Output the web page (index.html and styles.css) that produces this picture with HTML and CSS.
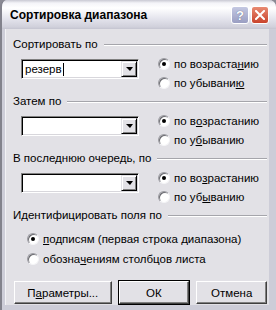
FILE: index.html
```html
<!DOCTYPE html>
<html lang="ru">
<head>
    <meta charset="UTF-8">
    <meta name="viewport" content="width=device-width, initial-scale=1.0">
    <title>Сортировка диапазона</title>
    <link rel="stylesheet" href="styles.css">
</head>
<body>
    <div class="window">
        <div class="titlebar">
            <span class="title">Сортировка диапазона</span>
            <div class="caption-buttons">
                <div class="cap help">?</div>
                <div class="cap close">
                    <svg width="10" height="10" viewBox="0 0 10 10">
                        <path d="M1 1 L9 9 M9 1 L1 9" stroke="#ffffff" stroke-width="2" stroke-linecap="square"/>
                    </svg>
                </div>
            </div>
        </div>

        <div class="client">
            <div class="group">
                <div class="group-label"><span>Сортировать по</span></div>
                <div class="sort-row">
                    <div class="combo">
                        <div class="combo-text">резерв<span class="caret"></span></div>
                        <div class="combo-btn"><span class="arrow"></span></div>
                    </div>
                    <div class="radios">
                        <label class="radio"><span class="dot checked"></span>по возраста<u>н</u>ию</label>
                        <label class="radio"><span class="dot"></span>по убывани<u>ю</u></label>
                    </div>
                </div>
            </div>

            <div class="group">
                <div class="group-label"><span>Затем по</span></div>
                <div class="sort-row">
                    <div class="combo">
                        <div class="combo-text"></div>
                        <div class="combo-btn"><span class="arrow"></span></div>
                    </div>
                    <div class="radios">
                        <label class="radio"><span class="dot checked"></span>по в<u>о</u>зрастанию</label>
                        <label class="radio"><span class="dot"></span>по у<u>б</u>ыванию</label>
                    </div>
                </div>
            </div>

            <div class="group">
                <div class="group-label"><span>В последнюю очередь, по</span></div>
                <div class="sort-row">
                    <div class="combo">
                        <div class="combo-text"></div>
                        <div class="combo-btn"><span class="arrow"></span></div>
                    </div>
                    <div class="radios">
                        <label class="radio"><span class="dot checked"></span>по во<u>з</u>растанию</label>
                        <label class="radio"><span class="dot"></span>по уб<u>ы</u>ванию</label>
                    </div>
                </div>
            </div>

            <div class="group ident">
                <div class="group-label"><span>Идентифицировать поля по</span></div>
                <div class="ident-radios">
                    <label class="radio"><span class="dot checked"></span><u>п</u>одписям (первая строка диапазона)</label>
                    <label class="radio"><span class="dot"></span>обозна<u>ч</u>ениям столбцов листа</label>
                </div>
            </div>

            <div class="buttons">
                <div class="btn wide">П<u>а</u>раметры...</div>
                <div class="btn default">ОК</div>
                <div class="btn">Отмена</div>
            </div>
        </div>
    </div>
</body>
</html>
```

FILE: styles.css
```css
body {
    margin: 0;
    padding: 0;
    font-family: "Liberation Sans", Arial, sans-serif;
    font-size: 11.5px;
    color: #000;
    background: #8a8a94;
}
.window {
    width: 276px;
    height: 310px;
    box-sizing: border-box;
    display: flex;
    flex-direction: column;
    background: #cdcdd8;
    border-left: 2px solid #82828c;
    border-radius: 7px 7px 0 0;
    overflow: hidden;
}
.titlebar {
    height: 29px;
    flex: none;
    display: flex;
    align-items: center;
    justify-content: space-between;
    padding: 1px 7px 0 8px;
    box-sizing: border-box;
    background: linear-gradient(#c9c9d3 0px, #f4f4f8 3px, #ffffff 8px, #e6e6ee 18px, #d0d0db 27px, #c4c4d0 29px);
}
.title {
    font-weight: bold;
    font-size: 12px;
    color: #000;
}
.caption-buttons {
    display: flex;
    gap: 2px;
}
.cap {
    width: 18px;
    height: 18px;
    box-sizing: border-box;
    border: 1px solid #ffffff;
    border-radius: 3px;
    display: flex;
    align-items: center;
    justify-content: center;
}
.help {
    background: linear-gradient(#c4c8e2, #9a9ec2);
    color: #fff;
    font-weight: bold;
    font-size: 13px;
    text-shadow: 0 0 1px #4a4e70;
}
.close {
    background: linear-gradient(#e88a72, #c9432c);
}

.client {
    flex: 1;
    margin: 0 7px 5px 3px;
    background: #e2e1e6;
    padding: 9px 2px 0 7px;
    border-left: 1px solid #f2f2f5;
}
.group {
    margin-bottom: 3px;
}
.group-label {
    display: flex;
    align-items: center;
    gap: 6px;
    height: 13px;
    line-height: 13px;
    margin-bottom: 3px;
}
.group-label::after {
    content: "";
    flex: 1;
    border-top: 1px solid #a5a5ab;
    border-bottom: 1px solid #ffffff;
}
.sort-row {
    display: flex;
    align-items: flex-start;
}
.combo {
    width: 118px;
    height: 20px;
    box-sizing: border-box;
    margin: 5px 0 0 8px;
    display: flex;
    background: #fff;
    border-top: 1px solid #808080;
    border-left: 1px solid #808080;
    border-right: 1px solid #ffffff;
    border-bottom: 1px solid #ffffff;
    box-shadow: inset 1px 1px #000, inset -1px -1px #d8d7dc;
    padding: 1px;
}
.combo-text {
    flex: 1;
    padding-left: 2px;
    line-height: 16px;
    display: flex;
    align-items: center;
}
.caret {
    width: 1px;
    height: 13px;
    background: #000;
    margin-left: 1px;
}
.combo-btn {
    width: 16px;
    height: 16px;
    box-sizing: border-box;
    background: #e2e1e6;
    border-top: 1px solid #e2e1e6;
    border-left: 1px solid #e2e1e6;
    border-right: 1px solid #000;
    border-bottom: 1px solid #000;
    box-shadow: inset 1px 1px #fff, inset -1px -1px #808080;
    display: flex;
    align-items: center;
    justify-content: center;
}
.arrow {
    width: 0;
    height: 0;
    border-left: 4px solid transparent;
    border-right: 3px solid transparent;
    border-top: 4px solid #000;
}
.radios {
    margin-left: 19px;
    display: flex;
    flex-direction: column;
}
.radio {
    display: flex;
    align-items: center;
    height: 19px;
    white-space: nowrap;
}
.dot {
    width: 12px;
    height: 12px;
    box-sizing: border-box;
    border-radius: 50%;
    margin-right: 4px;
    background: #fff;
    border: 1px solid;
    border-color: #9a9aa0 #f4f4f6 #f4f4f6 #9a9aa0;
    box-shadow: inset 1px 1px #6a6a70;
    position: relative;
}
.dot.checked::after {
    content: "";
    position: absolute;
    left: 3px;
    top: 3px;
    width: 4px;
    height: 4px;
    border-radius: 50%;
    background: #000;
}
.ident-radios {
    display: flex;
    flex-direction: column;
    margin: 7px 0 0 14px;
}
.ident-radios .radio {
    height: 20px;
}
.buttons {
    display: flex;
    gap: 7px;
    margin: 12px 0 0 1px;
}
.btn {
    width: 71px;
    height: 23px;
    box-sizing: border-box;
    display: flex;
    align-items: center;
    justify-content: center;
    background: #e2e1e6;
    border-top: 1px solid #ffffff;
    border-left: 1px solid #ffffff;
    border-right: 1px solid #404040;
    border-bottom: 1px solid #404040;
    box-shadow: inset -1px -1px #808080;
}
.btn.wide {
    width: 98px;
}
.btn.default {
    outline: 1px solid #000;
}
```
